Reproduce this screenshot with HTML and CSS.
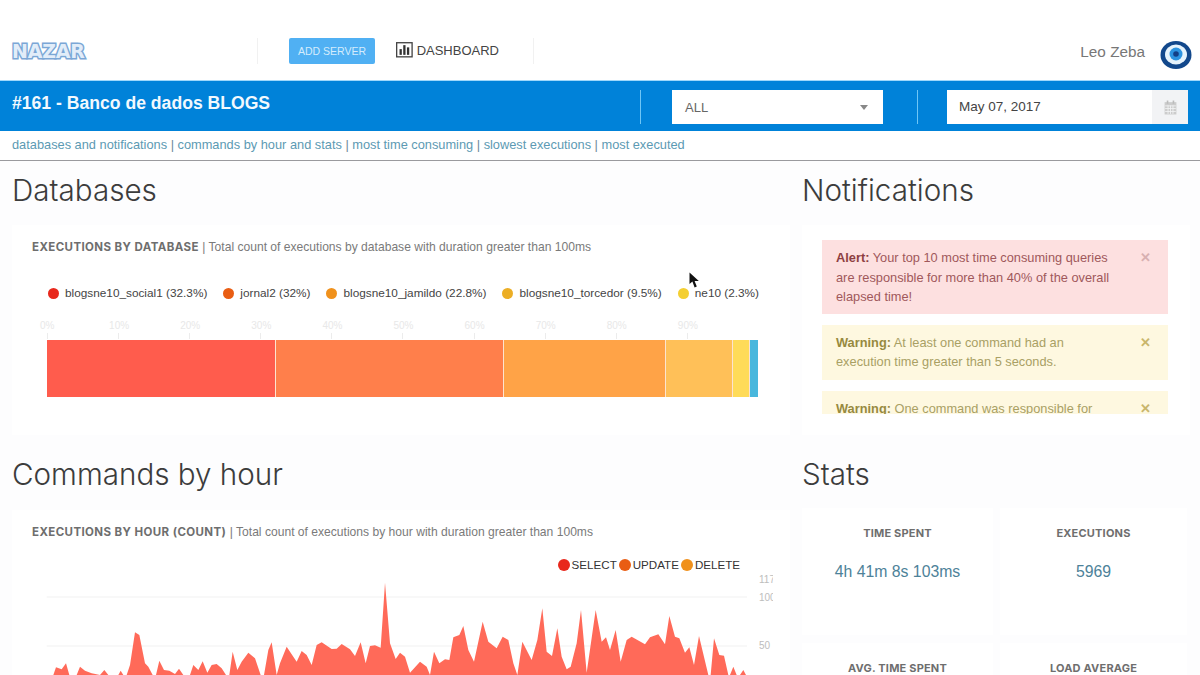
FILE: index.html
```html
<!DOCTYPE html>
<html lang="en">
<head>
    <meta charset="UTF-8">
    <meta name="viewport" content="width=device-width, initial-scale=1.0">
    <title>Nazar Dashboard</title>
    <link rel="stylesheet" href="styles.css">
</head>
<body>
    <header class="topbar">
        <div class="logo">NAZAR</div>
        <span class="divider"></span>
        <button class="btn-add" type="button">ADD SERVER</button>
        <a class="dash-link" href="#">
            <svg width="20" height="18" viewBox="0 0 20 18">
                <rect x="0.75" y="0.75" width="17.5" height="16" fill="none" stroke="#444" stroke-width="1.5"/>
                <rect x="4" y="8" width="2.6" height="6.5" fill="#333"/>
                <rect x="8.2" y="3.5" width="2.6" height="11" fill="#333"/>
                <rect x="12.4" y="6" width="2.6" height="8.5" fill="#333"/>
            </svg>
            DASHBOARD
        </a>
        <span class="divider"></span>
        <div class="user">
            <span>Leo Zeba</span>
            <svg width="32" height="30" viewBox="0 0 32 30">
                <ellipse cx="16" cy="15" rx="15.5" ry="14" fill="#12488c"/>
                <ellipse cx="16" cy="14.5" rx="11" ry="10" fill="#e6f3fc"/>
                <circle cx="16" cy="14" r="6.5" fill="#2c93e0"/>
                <circle cx="16" cy="14" r="2.8" fill="#123f86"/>
            </svg>
        </div>
    </header>

    <div class="server-bar">
        <h1>#161 - Banco de dados BLOGS</h1>
        <span class="bar-sep"></span>
        <div class="select-box">ALL<span class="caret"></span></div>
        <span class="bar-sep"></span>
        <div class="date-box">
            <span class="date-value">May 07, 2017</span>
            <span class="date-addon">
                <svg width="13" height="15" viewBox="0 0 12 14">
                    <rect x="0.5" y="2" width="11" height="11.5" fill="#ccc"/>
                    <rect x="2.5" y="0.5" width="1.5" height="3" fill="#bbb"/>
                    <rect x="8" y="0.5" width="1.5" height="3" fill="#bbb"/>
                    <path d="M1 5.5h10M1 8h10M1 10.7h10M3.7 5v8M6 5v8M8.3 5v8" stroke="#f2f3f5" stroke-width="0.8"/>
                </svg>
            </span>
        </div>
    </div>

    <nav class="anchors">
        <a href="#">databases and notifications</a> | <a href="#">commands by hour and stats</a> | <a href="#">most time consuming</a> | <a href="#">slowest executions</a> | <a href="#">most executed</a>
    </nav>

    <main class="content">
        <section>
            <h2>Databases</h2>
            <div class="card db-card">
                <div class="card-title"><b>EXECUTIONS BY DATABASE</b> | Total count of executions by database with duration greater than 100ms</div>
                <ul class="legend">
                    <li><i class="dot c1"></i>blogsne10_social1 (32.3%)</li>
                    <li><i class="dot c2"></i>jornal2 (32%)</li>
                    <li><i class="dot c3"></i>blogsne10_jamildo (22.8%)</li>
                    <li><i class="dot c4"></i>blogsne10_torcedor (9.5%)</li>
                    <li><i class="dot c5"></i>ne10 (2.3%)</li>
                </ul>
                <div class="axis">
                    <span class="first">0%</span><span>10%</span><span>20%</span><span>30%</span><span>40%</span>
                    <span>50%</span><span>60%</span><span>70%</span><span>80%</span><span>90%</span>
                </div>
                <div class="stack">
                    <div class="seg s1" style="width: 32.2%"></div>
                    <div class="seg s2" style="width: 32.1%"></div>
                    <div class="seg s3" style="width: 22.8%"></div>
                    <div class="seg s4" style="width: 9.4%"></div>
                    <div class="seg s5" style="width: 2.4%"></div>
                    <div class="seg s6" style="width: 1.1%"></div>
                </div>
            </div>
        </section>

        <section>
            <h2>Notifications</h2>
            <div class="card notif-card">
                <div class="notif-list">
                    <div class="alert alert-red">
                        <p><b>Alert:</b> Your top 10 most time consuming queries are responsible for more than 40% of the overall elapsed time!</p>
                        <span class="close">&#10005;</span>
                    </div>
                    <div class="alert alert-yellow">
                        <p><b>Warning:</b> At least one command had an execution time greater than 5 seconds.</p>
                        <span class="close">&#10005;</span>
                    </div>
                    <div class="alert alert-yellow">
                        <p><b>Warning:</b> One command was responsible for more than 20% of the elapsed time.</p>
                        <span class="close">&#10005;</span>
                    </div>
                </div>
            </div>
        </section>

        <section>
            <h2>Commands by hour</h2>
            <div class="card hour-card">
                <div class="card-title"><b>EXECUTIONS BY HOUR (COUNT)</b> | Total count of executions by hour with duration greater than 100ms</div>
                <ul class="legend-hour">
                    <li><i class="dot big c1"></i>SELECT</li>
                    <li><i class="dot big c2"></i>UPDATE</li>
                    <li><i class="dot big c3"></i>DELETE</li>
                </ul>
                <svg class="area-chart" width="753" height="140" viewBox="0 75 2259 420">
                    <line class="grid" x1="80" y1="141" x2="2181" y2="141"/>
                    <line class="grid" x1="80" y1="288" x2="2181" y2="288"/>
                    <polygon class="area" points="100,495 100,375 108,352 125,358 138,340 148,375 170,375 180,350 195,362 215,370 240,375 253,360 265,375 295,375 302,362 310,375 320,375 330,345 345,247 358,255 375,340 385,350 398,375 408,375 418,332 432,360 448,362 465,372 477,356 490,375 510,375 520,345 535,360 548,334 562,368 575,345 590,342 605,355 618,375 628,375 638,305 652,360 665,335 685,308 705,325 722,375 732,375 745,300 755,277 770,375 780,340 800,290 830,335 845,303 860,315 875,345 890,285 905,277 935,297 950,296 965,282 990,298 1005,318 1022,277 1037,340 1050,288 1065,286 1082,293 1095,98 1110,280 1127,327 1140,308 1140,495"/>
                    <polygon class="area" transform="translate(1140)" points="0,495 0,308 15,320 30,368 60,335 80,350 90,375 102,305 118,340 135,328 148,330 160,262 178,255 190,228 205,300 222,335 248,215 265,275 290,295 308,260 325,270 340,340 352,375 367,275 395,330 412,270 427,175 440,305 456,318 472,235 485,320 500,358 512,350 530,280 543,180 560,368 587,180 605,275 618,262 630,300 647,240 662,335 680,270 695,260 735,283 750,262 775,253 795,283 808,198 825,260 838,265 855,308 868,292 882,345 897,258 925,375 932,375 942,265 958,315 972,317 985,375 990,375 1000,350 1010,375 1020,375 1030,360 1038,375 1038,495"/>
                    <text class="tick" x="2217" y="100">117</text>
                    <text class="tick" x="2217" y="153">100</text>
                    <text class="tick" x="2217" y="298">50</text>
                </svg>
            </div>
        </section>

        <section>
            <h2>Stats</h2>
            <div class="stats">
                <div class="stat"><h3>TIME SPENT</h3><div class="stat-value">4h 41m 8s 103ms</div></div>
                <div class="stat"><h3>EXECUTIONS</h3><div class="stat-value">5969</div></div>
                <div class="stat"><h3>AVG. TIME SPENT</h3><div class="stat-value">2s 830ms</div></div>
                <div class="stat"><h3>LOAD AVERAGE</h3><div class="stat-value">0.12</div></div>
            </div>
        </section>
    </main>

    <svg class="cursor" width="11" height="17" viewBox="0 0 11 17">
        <path d="M0.5 0.5L0.5 12L3.4 9.6L5.6 15.5L7.8 14.6L5.6 9L9.8 9Z" fill="#111"/>
    </svg>
</body>
</html>
```

FILE: styles.css
```css
html, body {
    height: 675px;
    overflow: hidden;
}

body {
    margin: 0;
    padding: 0;
    font-family: "Liberation Sans", Arial, sans-serif;
    background: #fdfdfe;
    color: #444;
}

.topbar {
    display: flex;
    align-items: center;
    height: 80px;
    background: #fff;
    padding: 22px 8px 0 0;
    box-sizing: border-box;
}

.logo {
    width: 245px;
    margin-left: 12px;
    font-family: "DejaVu Sans", sans-serif;
    font-weight: bold;
    font-size: 19px;
    letter-spacing: -0.2px;
    color: #e2edf9;
    -webkit-text-stroke: 3px #7ba7d6;
    paint-order: stroke fill;
}

.divider {
    width: 1px;
    height: 26px;
    background: #f1f1f1;
}

.btn-add {
    width: 86px;
    height: 26px;
    margin-left: 31px;
    border: none;
    border-radius: 2px;
    background: #50b0f3;
    color: #d5ecfc;
    font-family: inherit;
    font-size: 10.5px;
    padding: 0;
}

.dash-link {
    display: flex;
    align-items: center;
    gap: 3px;
    width: 103px;
    margin: -2px 34px 0 21px;
    color: #444;
    font-size: 13px;
    text-decoration: none;
}

.user {
    display: flex;
    align-items: center;
    gap: 15px;
    margin-left: auto;
    color: #777;
    font-size: 15.3px;
}

.user svg {
    margin-top: 8px;
}

.user span {
    margin-top: 2px;
}

.server-bar {
    display: flex;
    align-items: center;
    height: 51px;
    padding: 2px 12px 0;
    box-sizing: border-box;
    background: #0082d9;
    border-top: 1px solid #9fd8fb;
}

.server-bar h1 {
    width: 628px;
    margin: -8px 0 0;
    color: #f2f9fe;
    font-size: 17.6px;
    font-weight: bold;
}

.bar-sep {
    width: 1px;
    height: 34px;
    background: #6fc6f6;
}

.select-box {
    display: flex;
    align-items: center;
    justify-content: space-between;
    width: 211px;
    height: 34px;
    margin: 0 34px 0 31px;
    padding: 0 15px 0 13px;
    box-sizing: border-box;
    background: #fff;
    color: #666;
    font-size: 13px;
}

.caret {
    width: 0;
    height: 0;
    border-left: 4px solid transparent;
    border-right: 4px solid transparent;
    border-top: 5px solid #888;
}

.date-box {
    display: flex;
    align-items: stretch;
    width: 241px;
    height: 34px;
    margin-left: 29px;
    background: #fff;
}

.date-value {
    flex: 1;
    padding-left: 12px;
    line-height: 34px;
    color: #444;
    font-size: 13.5px;
}

.date-addon {
    display: flex;
    align-items: center;
    justify-content: center;
    width: 36px;
    background: #f2f3f5;
}

.anchors {
    height: 29px;
    padding-left: 12px;
    line-height: 28px;
    background: #fff;
    border-bottom: 1px solid #9a9a9e;
    color: #6d8a99;
    font-size: 12.8px;
}

.anchors a {
    color: #5c9ab3;
    text-decoration: none;
}

.content {
    display: grid;
    grid-template-columns: 778px 388px;
    column-gap: 12px;
    padding: 11px 0 0 12px;
}

h2 {
    margin: 0 0 17px;
    font-family: Inter, "Liberation Sans", sans-serif;
    font-size: 29.6px;
    font-weight: 300;
    line-height: 36px;
    color: #3c3c3c;
}

.card {
    background: #fff;
    margin-bottom: 21px;
}

.db-card {
    height: 210px;
    padding: 15px 0 0 20px;
    box-sizing: border-box;
}

.card-title {
    height: 14px;
    line-height: 14px;
    color: #7a7a7a;
    font-size: 12.1px;
    white-space: nowrap;
}

.card-title b {
    font-family: Inter, sans-serif;
    font-size: 11.5px;
    letter-spacing: 0.4px;
    color: #6e6e6e;
}

.legend {
    display: flex;
    gap: 16px;
    margin: 32px 0 0 16px;
    padding: 0;
    list-style: none;
    color: #444;
    font-size: 11.8px;
    line-height: 14px;
    white-space: nowrap;
}

.legend li {
    display: flex;
    align-items: center;
    gap: 6px;
}

.dot {
    display: inline-block;
    width: 11px;
    height: 11px;
    border-radius: 50%;
}

.dot.big {
    width: 12px;
    height: 12px;
}

.c1 { background: #e8281c; }
.c2 { background: #e95d13; }
.c3 { background: #f0911c; }
.c4 { background: #ecae25; }
.c5 { background: #f4cf32; }

.axis {
    display: flex;
    width: 711px;
    height: 21px;
    margin: 19px 0 0 15px;
}

.axis span {
    position: relative;
    width: 71.1px;
    padding-top: 1px;
    text-indent: -9px;
    color: #e8e8e8;
    font-size: 10px;
    line-height: 12px;
}

.axis .first {
    text-indent: -7px;
}

.axis span::after {
    content: "";
    position: absolute;
    left: 0;
    top: 14px;
    width: 1px;
    height: 6px;
    background: #ececec;
}

.stack {
    display: flex;
    width: 711px;
    height: 57px;
    margin-left: 15px;
}

.seg {
    box-sizing: border-box;
    border-right: 1px solid #fde3d0;
}

.s1 { background: #ff5c4d; }
.s2 { background: #ff7f4b; }
.s3 { background: #ffa347; }
.s4 { background: #ffc058; }
.s5 { background: #ffdb58; }
.s6 { background: #48b7dd; border-right: none; }

.notif-card {
    height: 210px;
    padding: 15px 22px 0 20px;
    box-sizing: border-box;
}

.notif-list {
    height: 174px;
    overflow: hidden;
}

.alert {
    display: flex;
    justify-content: space-between;
    margin-bottom: 11px;
    padding: 8px 17px 7px 14px;
    font-size: 12.8px;
    line-height: 19.5px;
}

.alert p {
    width: 280px;
    margin: 0;
}

.alert-red {
    background: #fde0e0;
    color: #a0585b;
}

.alert-red b {
    color: #8e3f42;
}

.alert-yellow {
    padding-bottom: 8px;
    background: #fef8e0;
    color: #a9a064;
}

.alert-yellow b {
    color: #978a3e;
}

.close {
    font-size: 13px;
    font-weight: bold;
    color: #c9b66b;
}

.alert-red .close {
    color: #d8b0b1;
}

.hour-card {
    height: 300px;
    margin-top: 18px;
    padding: 15px 0 0 20px;
    box-sizing: border-box;
}

.legend-hour {
    display: flex;
    justify-content: flex-end;
    gap: 2px;
    width: 708px;
    margin: 19px 0 3px;
    padding: 0;
    list-style: none;
    color: #333;
    font-size: 11.6px;
    line-height: 14px;
}

.legend-hour li {
    display: flex;
    align-items: center;
    gap: 2px;
}

.area-chart {
    display: block;
    margin-left: -12px;
}

.area-chart .grid {
    stroke: #f1f1f1;
    stroke-width: 3;
}

.area-chart .area {
    fill: #ff6a59;
}

.area-chart .tick {
    fill: #bdbdbd;
    font-size: 30px;
}

.stats {
    display: grid;
    grid-template-columns: 191px 187px;
    grid-auto-rows: 127px;
    gap: 8px 7px;
    margin-top: -1px;
}

.stat {
    background: #fff;
    text-align: center;
}

.stat h3 {
    margin: 18px 0 0;
    color: #6e6e6e;
    font-family: Inter, sans-serif;
    font-size: 11px;
    letter-spacing: 0.2px;
    font-weight: bold;
    line-height: 14px;
}

.stat-value {
    margin-top: 22px;
    color: #4d8299;
    font-size: 15.8px;
    line-height: 20px;
}

.cursor {
    position: absolute;
    left: 689px;
    top: 272px;
}
```
